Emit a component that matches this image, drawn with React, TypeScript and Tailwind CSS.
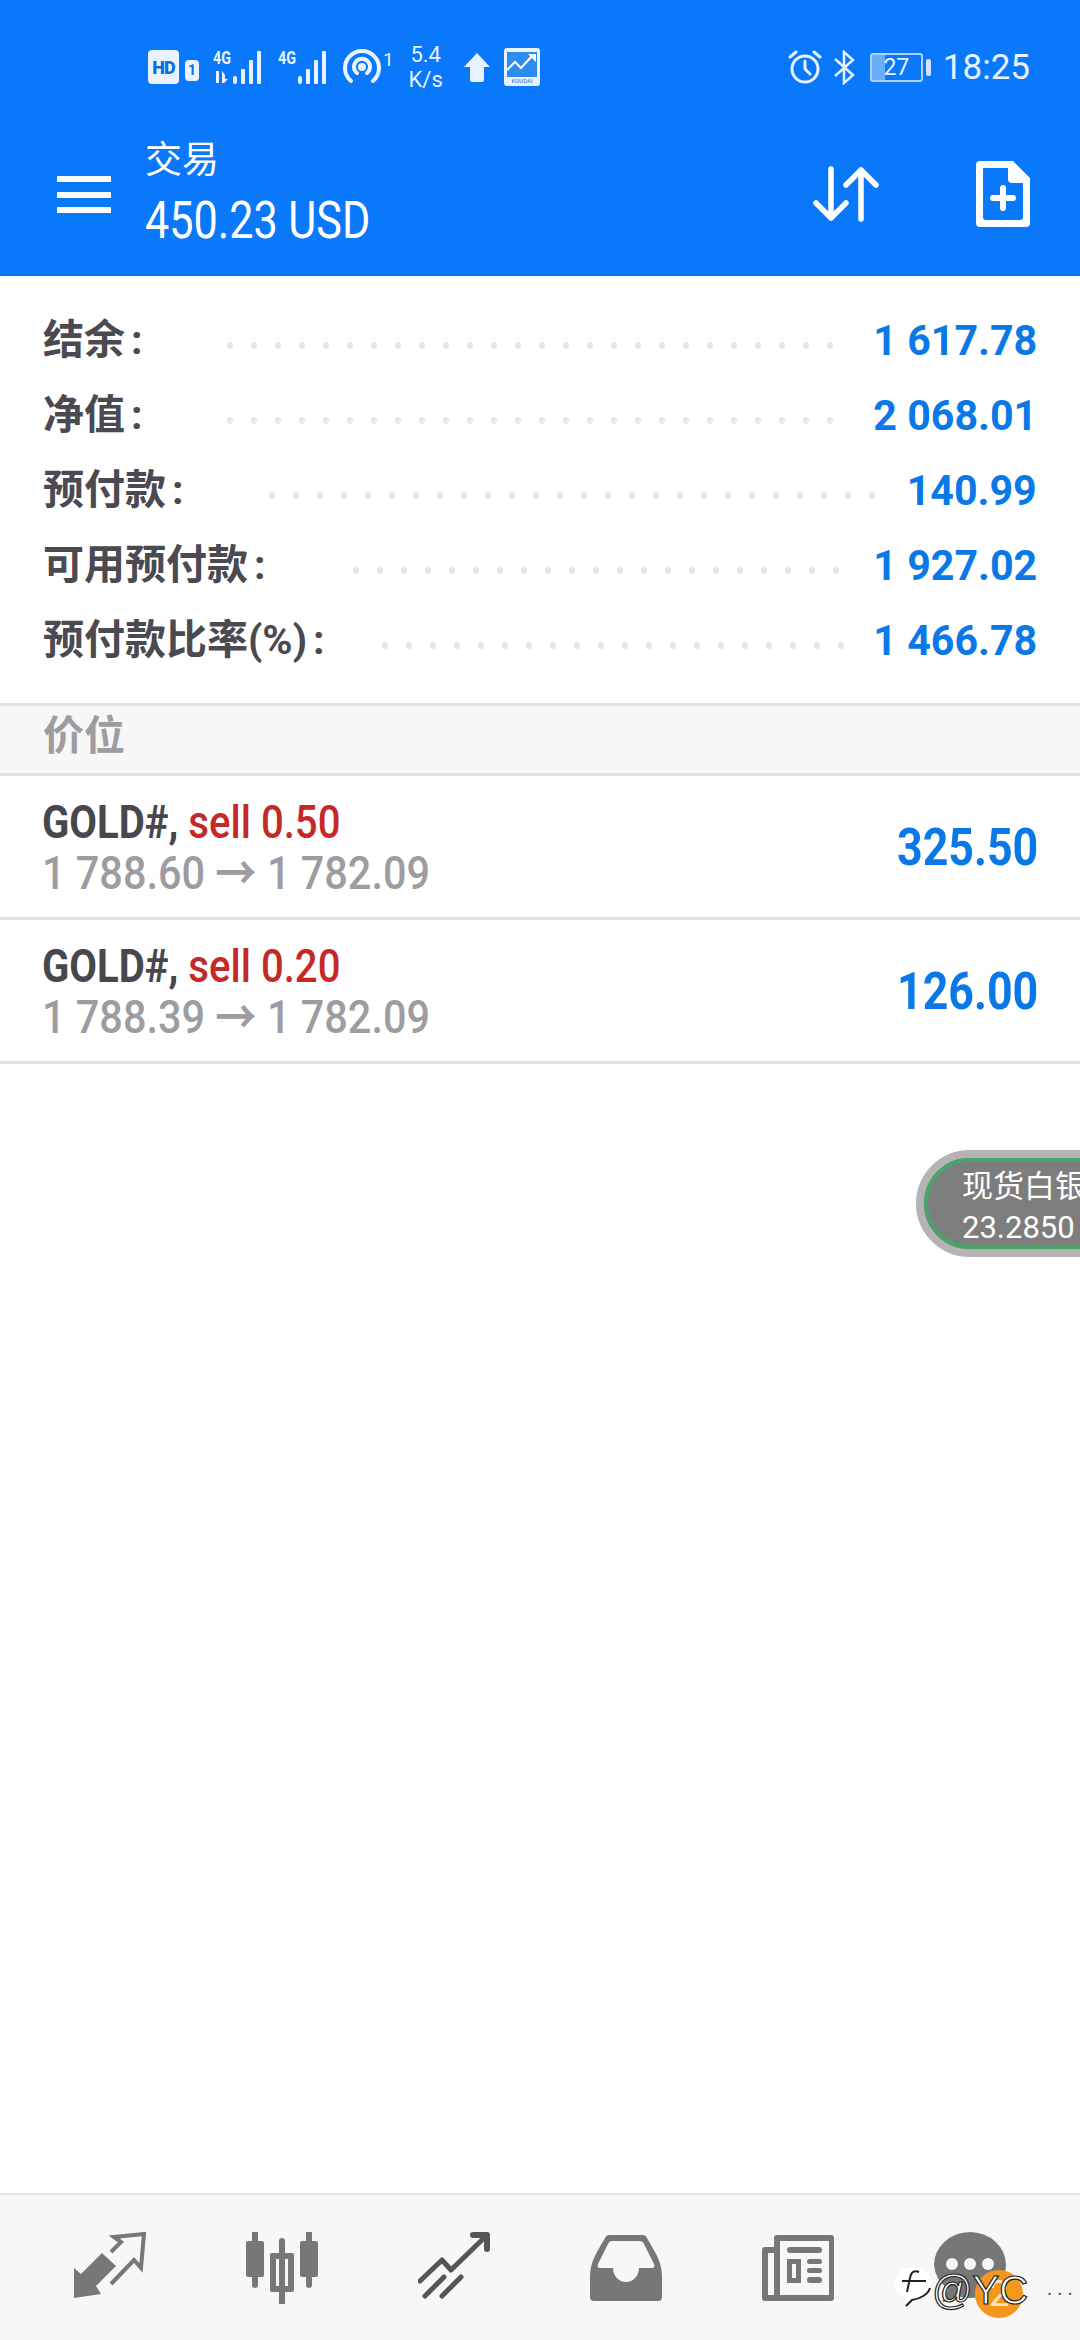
const ACCOUNT = [
  { label: "结余", value: "1 617.78", dots: 26, end: "pr-[37px]" },
  { label: "净值", value: "2 068.01", dots: 26, end: "pr-[37px]" },
  { label: "预付款", value: "140.99", dots: 26, end: "pr-[29px]" },
  { label: "可用预付款", value: "1 927.02", dots: 21, end: "pr-[31px]" },
  { label: "预付款比率(%)", value: "1 466.78", dots: 20, end: "pr-[26px]" },
];

const POSITIONS = [
  { volume: "sell 0.50", prices: "1 788.60", profit: "325.50" },
  { volume: "sell 0.20", prices: "1 788.39", profit: "126.00" },
];

function Signal({ small }: { small?: boolean }) {
  return (
    <svg className="overflow-visible" width="53" height="36" viewBox="0 0 53 36" fill="#e8f3ff">
      <text x="0" y="15" fontSize="18" fontWeight="700" fontFamily="Roboto" fill="#e8f3ff" textLength="18" lengthAdjust="spacingAndGlyphs">4G</text>
      {small && <path d="M3 22h3v12H3zM9 34V22l3 4v4h3l-4 4z" />}
      <rect x="20" y="27" width="4" height="8" rx="2" />
      <rect x="28" y="20" width="4" height="15" rx="1" />
      <rect x="36" y="11" width="4" height="24" rx="1" />
      <rect x="44" y="2" width="4" height="33" rx="1" />
    </svg>
  );
}

function StatusBar() {
  return (
    <div className="h-[134px] flex items-center pl-[148px] pr-[50px] text-[#e8f3ff]">
      <div className="w-[31px] h-[34px] rounded-[4px] bg-[#e8f3ff] flex items-center justify-center text-[#0a6fe0] text-[18px] font-black tracking-[-1px]">
        HD
      </div>
      <div className="ml-[6px] mt-[6px] w-[14px] h-[21px] rounded-[4px] bg-[#e8f3ff] flex items-center justify-center text-[#0a6fe0] text-[14px] font-bold">
        1
      </div>
      <div className="ml-[14px] flex gap-[12px]">
        <Signal small />
        <Signal />
      </div>
      <svg className="ml-[12px]" width="38" height="36" viewBox="0 0 38 36" fill="none" stroke="#e8f3ff" strokeWidth="4" strokeLinecap="round">
        <path d="M8 32A17 17 0 1 1 30 32" />
        <path d="M14 24a8 8 0 1 1 10 0" />
        <circle cx="19" cy="18" r="2" fill="#e8f3ff" />
      </svg>
      <span className="text-[19px] leading-none self-start mt-[50px] ml-[2px]">1</span>
      <div className="ml-[12px] w-[40px] text-[22px] leading-[25px] text-center">
        <div>5.4</div>
        <div>K/s</div>
      </div>
      <svg className="ml-[18px]" width="26" height="30" viewBox="0 0 26 30" fill="#e8f3ff">
        <path d="M13 1 26 15h-6v13a2 2 0 0 1-2 2H8a2 2 0 0 1-2-2V15H0z" />
      </svg>
      <svg className="ml-[14px]" width="36" height="38" viewBox="0 0 36 38">
        <rect width="36" height="38" rx="3" fill="#e8f3ff" />
        <rect x="3" y="4" width="30" height="25" fill="#2d8cf0" />
        <path d="M3 22 11 14l6 6 11-12" fill="none" stroke="#fff" strokeWidth="2" />
        <path d="M24 6h8v8z" fill="#fff" />
        <text x="18" y="35" textAnchor="middle" fontSize="6" fontFamily="Roboto" fill="#2d6fb0">KOUDAI</text>
      </svg>

      <div className="ml-auto flex items-center">
        <svg width="34" height="34" viewBox="0 0 34 34" fill="none" stroke="#e8f3ff" strokeWidth="3" strokeLinecap="round">
          <circle cx="17" cy="19" r="13" />
          <path d="M17 11v8l5 5M2 7l6-5M32 7l-6-5" />
        </svg>
        <svg className="ml-[11px]" width="22" height="35" viewBox="0 0 22 35" fill="none" stroke="#e8f3ff" strokeWidth="2.5">
          <path d="M2 9 20 25l-9 8V2l9 8L2 26" />
        </svg>
        <div className="ml-[15px] w-[53px] h-[29px] rounded-[3px] border-2 border-[#a9d2ff] relative flex items-center justify-center text-[23px] leading-none text-[#e8f3ff]">
          <div className="absolute left-0 top-0 bottom-0 w-[13px] bg-[#6aadfb]" />
          <span className="relative">27</span>
        </div>
        <div className="ml-[3px] w-[5px] h-[17px] rounded-[2px] bg-[#cfe5ff]" />
        <span className="ml-[12px] text-[35px] leading-none">18:25</span>
      </div>
    </div>
  );
}

function Toolbar() {
  return (
    <div className="h-[141px] flex items-start pl-[57px] pr-[50px] text-white">
      <div className="mt-[42px] w-[54px] flex flex-col gap-[9.5px]">
        <div className="h-[6px] bg-white" />
        <div className="h-[6px] bg-white" />
        <div className="h-[6px] bg-white" />
      </div>
      <div className="ml-[34px]">
        <div className="text-[37px] leading-[44px] mt-[5px]">交易</div>
        <div className="text-[52px] leading-[50px] mt-[13px] whitespace-nowrap origin-left scale-x-[.83]">450.23 USD</div>
      </div>
      <svg className="ml-auto mt-[32px]" width="66" height="56" viewBox="0 0 66 56" fill="none" stroke="#fff" strokeWidth="5.5" strokeLinecap="round" strokeLinejoin="round">
        <path d="M18 3v49M3 37l15 15 15-15M48 53V4M33 19 48 4l15 15" />
      </svg>
      <svg className="ml-[97px] mt-[27px]" width="54" height="66" viewBox="0 0 54 66">
        <path fillRule="evenodd" fill="#fff" d="M4 0h33l17 17v45a4 4 0 0 1-4 4H4a4 4 0 0 1-4-4V4a4 4 0 0 1 4-4zM7 7v49a3 3 0 0 0 3 3h34a3 3 0 0 0 3-3V22H36a4 4 0 0 1-4-4V7z" />
        <path d="M27 27v20M17 37h20" stroke="#fff" strokeWidth="6" strokeLinecap="round" />
      </svg>
    </div>
  );
}

function AccountRow({ row }: { row: (typeof ACCOUNT)[number] }) {
  return (
    <div className="h-[75px] flex items-center">
      <span className="text-[41px] font-bold text-[#4a4a50] leading-none whitespace-nowrap">
        {row.label}
        <span className="ml-[6px]">:</span>
      </span>
      <div className={`flex-1 min-w-0 flex justify-end gap-[18px] pt-[10px] ${row.end}`}>
        {Array.from({ length: row.dots }).map((_, i) => (
          <div key={i} className="w-[6px] h-[7px] rounded-full bg-[#e6e6e6] shrink-0" />
        ))}
      </div>
      <span className="text-[42px] font-bold text-[#0a78e6] leading-none whitespace-nowrap origin-right scale-x-[.98]">{row.value}</span>
    </div>
  );
}

function PositionRow({ item }: { item: (typeof POSITIONS)[number] }) {
  return (
    <div className="h-[144px] border-b-[3px] border-[#e3e3e3] flex items-center justify-between pl-[42px] pr-[42px]">
      <div className="whitespace-nowrap pt-[2px]">
        <div className="text-[46px] leading-[50px] font-bold text-[#47474d] origin-left scale-x-[.872]">
          GOLD#, <span className="font-medium text-[#c62828]">{item.volume}</span>
        </div>
        <div className="text-[46px] leading-[50px] mt-[1px] font-medium text-[#9c9ca1] origin-left scale-x-[.9]">
          {item.prices} <span className="font-bold">→</span> 1 782.09
        </div>
      </div>
      <span className="text-[52px] font-bold text-[#0a78e6] leading-none mt-[2px] origin-right scale-x-[.86]">{item.profit}</span>
    </div>
  );
}

function BottomNav() {
  return (
    <div className="h-[147px] shrink-0 border-t-[2px] border-[#e3e3e3] bg-[#f7f7f7] grid grid-cols-[repeat(6,172px)] pl-[24px] items-center">
      <div className="flex justify-center">
        <svg width="72" height="72" viewBox="0 0 72 72" fill="#777">
          <path d="M0 36l7 6 21-21 14 13-20 20 5 8-27 4z" />
          <path d="M37 20 47 10 40 5l30-3-3 34-7-8-23 24" fill="none" stroke="#777" strokeWidth="4" />
        </svg>
      </div>
      <div className="flex justify-center">
        <svg width="72" height="72" viewBox="0 0 72 72" fill="#777" stroke="none">
          <path d="M9 0v53M63 0v53M36 9v63" stroke="#777" strokeWidth="6" strokeLinecap="round" />
          <rect x="0" y="9" width="18" height="36" rx="2" />
          <rect x="54" y="9" width="18" height="36" rx="2" />
          <path fillRule="evenodd" d="M26 21h20a2 2 0 0 1 2 2v35a2 2 0 0 1-2 2H26a2 2 0 0 1-2-2V23a2 2 0 0 1 2-2zm4 6v27h12V27z" />
        </svg>
      </div>
      <div className="flex justify-center">
        <svg width="72" height="72" viewBox="0 0 72 72" fill="none" stroke="#555" strokeWidth="5" strokeLinecap="round" strokeLinejoin="round">
          <path d="M2 49 24 28l9 10L67 5" />
          <path d="M55 3h14v14" strokeWidth="6" />
          <path d="M26 45 7 64M43 45 24 64" />
        </svg>
      </div>
      <div className="flex justify-center">
        <svg width="72" height="72" viewBox="0 0 72 72">
          <path fillRule="evenodd" fill="#777" d="M20 3h32a5 5 0 0 1 5 3c8 14 15 24 15 38v21a4 4 0 0 1-4 4H4a4 4 0 0 1-4-4V44C0 30 7 20 15 6a5 5 0 0 1 5-3zm3 6c-3 0-4 1-5 3L8 32c-1 3 0 4 3 4h12c0 8 6 14 13 14s13-6 13-14h12c3 0 4-1 3-4L54 12c-1-2-2-3-5-3z" />
        </svg>
      </div>
      <div className="flex justify-center">
        <svg width="72" height="72" viewBox="0 0 72 72" fill="#777">
          <path fillRule="evenodd" d="M15 3h54a3 3 0 0 1 3 3v60a3 3 0 0 1-3 3H3a3 3 0 0 1-3-3V18a3 3 0 0 1 3-3h9V6a3 3 0 0 1 3-3zm3 6v54h49V9zM6 21v42h6V21z" />
          <rect x="25" y="15" width="35" height="6" rx="3" />
          <path fillRule="evenodd" d="M25 27h14v24H25zm5 5v14h4V32z" />
          <rect x="45" y="27" width="15" height="5" rx="2.5" />
          <rect x="45" y="36" width="15" height="5" rx="2.5" />
          <rect x="45" y="45" width="15" height="6" rx="3" />
        </svg>
      </div>
      <div className="flex justify-center relative">
        <svg width="72" height="72" viewBox="0 0 72 72">
          <path fill="#777" d="M36 0a36 33 0 0 1 0 66c-5 0-9-1-13-2l-13 6c-2 0-2-1-1-2l5-11A33 33 0 0 1 0 33 36 33 0 0 1 36 0z" />
          <circle cx="18" cy="32" r="6" fill="#f7f7f7" />
          <circle cx="36" cy="32" r="6" fill="#f7f7f7" />
          <circle cx="54" cy="32" r="6" fill="#f7f7f7" />
        </svg>
        <div className="absolute left-[91px] top-[38px] w-[48px] h-[48px] rounded-full bg-[#f5961d] flex items-center justify-center text-[#fde3bd] text-[36px] leading-none">
          2
        </div>
        <svg className="absolute left-[10px] top-[34px]" width="38" height="42" viewBox="0 0 38 42" fill="#fff" stroke="#222" strokeWidth="2">
          <path d="M19 1c10 0 18 7 18 16s-9 17-19 17l-7 6 1-8C5 29 1 24 1 17 1 8 9 1 19 1z" stroke="none" />
          <path d="M36 22c-2 7-11 11-18 12l-6 6" fill="none" />
          <path d="M25 6c-5-2-8 0-9 6l-3 14M8 15h24" fill="none" />
        </svg>
        <div className="absolute left-[48px] top-[32px] text-[40px] leading-[52px] whitespace-nowrap text-white font-['Liberation_Sans',sans-serif] [-webkit-text-stroke:1.2px_#222]">
          @YC
        </div>
        <div className="absolute left-[163px] top-[46px] text-[20px] leading-none tracking-[5px] text-[#555]">...</div>
      </div>
    </div>
  );
}

export default function App() {
  return (
    <div className="relative w-[1080px] h-[2340px] overflow-hidden bg-white flex flex-col font-['Roboto','Noto_Sans_CJK_SC',sans-serif]">
      <header className="h-[276px] shrink-0 bg-[#0a78fa] border-b border-[#0a6fe0]">
        <StatusBar />
        <Toolbar />
      </header>

      <section className="h-[427px] shrink-0 pt-[27px] pl-[43px] pr-[43px]">
        {ACCOUNT.map((row) => (
          <AccountRow key={row.label} row={row} />
        ))}
      </section>

      <div className="h-[73px] shrink-0 border-y-[3px] border-[#e3e3e3] bg-[#f7f7f7] pl-[43px] pb-[6px] flex items-center text-[41px] font-bold text-[#9c9ca1] leading-none">
        价位
      </div>
      {POSITIONS.map((item) => (
        <PositionRow key={item.profit} item={item} />
      ))}

      <div className="flex-1" />
      <BottomNav />

      <div className="absolute left-[916px] top-[1150px] w-[220px] h-[107px] rounded-full border-[8px] border-[#b5b3b5] bg-[#7d7d7d]">
        <div className="w-full h-full rounded-full border-[4px] border-[#4aa46a] pl-[34px] pt-[4px] text-white text-[31px] leading-[41px] whitespace-nowrap">
          <div>现货白银</div>
          <div>23.2850</div>
        </div>
      </div>
    </div>
  );
}
